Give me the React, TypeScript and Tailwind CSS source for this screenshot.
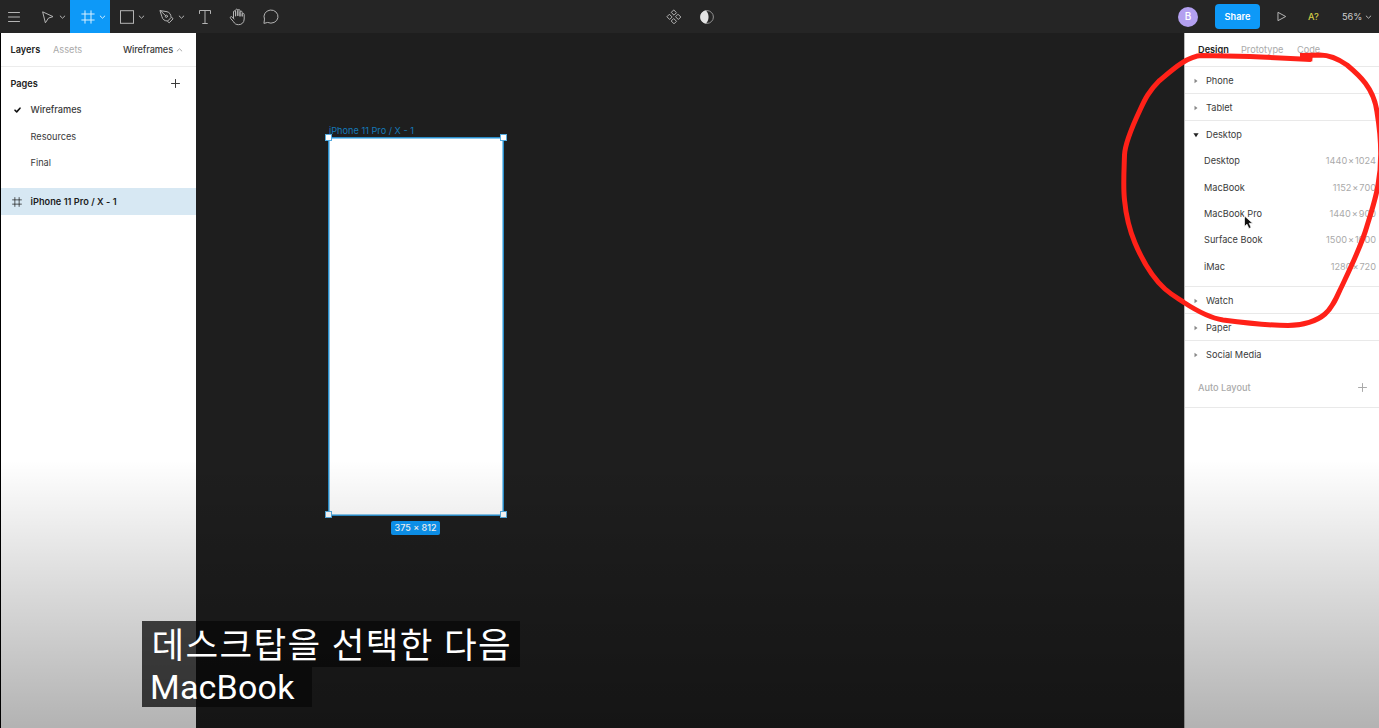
import React from "react";

const stroke = { fill: "none", stroke: "currentColor", strokeLinecap: "round", strokeLinejoin: "round" } as const;

function Chevron({ up = false, className = "" }: { up?: boolean; className?: string }) {
  return (
    <svg className={`block shrink-0 ${className}`} width="7" height="6" viewBox="0 0 7 6" {...stroke}>
      <path d={up ? "M1.2 4 3.5 1.8 5.8 4" : "M1.2 2 3.5 4.2 5.8 2"} />
    </svg>
  );
}

function FrameIcon({ size, className = "" }: { size: number; className?: string }) {
  return (
    <svg className={`block shrink-0 ${className}`} width={size} height={size} viewBox="0 0 14 14" {...stroke}>
      <path d="M4 .8v12.4M10 .8v12.4M.8 4h12.4M.8 10h12.4" />
    </svg>
  );
}

function Plus({ className = "" }: { className?: string }) {
  return (
    <svg className={`block ${className}`} width="10" height="10" viewBox="0 0 10 10" {...stroke}>
      <path d="M4.5 .5v8M.5 4.5h8" />
    </svg>
  );
}

function Toolbar() {
  return (
    <header className="flex h-[33px] shrink-0 items-center bg-[#252525] text-[#b4b4b4]">
      <svg className="ml-2 block" width="12" height="12" viewBox="0 0 12 12" {...stroke}>
        <path d="M.5 1.5h11M.5 6h11M.5 10.5h11" />
      </svg>
      <svg className="ml-[22px] block" width="13" height="14" viewBox="0 0 13 14" {...stroke}>
        <path d="M1 2l10 4.6-4.5 1.5L3.6 12.5z" />
      </svg>
      <Chevron className="ml-1" />
      <div className="ml-1 flex h-full w-[40px] items-center bg-[#0d99f8] pl-[11px] text-[#d8f0ff]">
        <FrameIcon size={14} />
        <Chevron className="ml-[4px]" />
      </div>
      <svg className="ml-[9px] block" width="16" height="16" viewBox="0 0 16 16" {...stroke}>
        <rect x="1.5" y="1.7" width="13" height="12.6" strokeLinejoin="miter" />
      </svg>
      <Chevron className="ml-[3px]" />
      <svg className="ml-[14px] block" width="16" height="15" viewBox="0 0 16 15" {...stroke}>
        <path d="M1.3 1.6 8 2.7c2.6.6 4 2.8 4.1 5.8L8.7 12C5.7 12 3.6 10.6 3 8z" />
        <path d="M1.3 1.6 6.6 6.7M12.7 8.3l1.3 1.6-3.8 3.9-1.6-1.4" />
        <circle cx="7.4" cy="7.3" r="1.1" />
      </svg>
      <Chevron className="ml-[3px]" />
      <svg className="ml-[13px] block" width="14" height="16" viewBox="0 0 14 16" {...stroke}>
        <path d="M1.5 4.5v-3h11v3M7 1.5v13M4.7 14.5h4.6" />
      </svg>
      <svg className="ml-[17px] block" width="17" height="18" viewBox="0 0 17 18" {...stroke}>
        <path d="M4.5 10V4c0-1.6 2.1-1.6 2.1 0v4M6.6 7.5V2.4c0-1.7 2.2-1.7 2.2 0v5.1M8.8 7.5V2.7c0-1.6 2.2-1.6 2.2 0v5.3M11 8V4.3c0-1.6 2.2-1.6 2.2 0V8M13.2 8V6.5c0-1.5 2-1.4 2 0V11c0 3.6-2.6 5.7-5.6 5.7-2.5 0-4-1-5.1-3L1.6 10.4c-1-1.5.7-2.4 1.7-1.4L5 11" />
      </svg>
      <svg className="ml-[16px] block" width="17" height="17" viewBox="0 0 17 17" {...stroke}>
        <path d="M2 15l.5-3.9A7 6.6 0 1 1 6 14.6z" />
      </svg>
      <svg className="ml-[386.5px] block" width="16" height="16" viewBox="0 0 16 16" {...stroke}>
        <path d="M8 1.2l2.5 2.5L8 6.2 5.5 3.7zM8 9.8l2.5 2.5L8 14.8l-2.5-2.5zM3.7 5.5l2.5 2.5-2.5 2.5L1.2 8zM12.3 5.5l2.5 2.5-2.5 2.5L9.8 8z" />
      </svg>
      <svg className="ml-[17px] block" width="16" height="16" viewBox="0 0 16 16">
        <circle cx="8" cy="8" r="6.4" fill="none" stroke="#929292" />
        <path d="M7 1.5c3.4 3.7 3.4 9.3 0 13C-.7 13.500-.7 2.500 7 1.500z" fill="#e2e2e2" />
      </svg>
      <div className="ml-auto flex h-full items-center">
        <div className="flex size-5 items-center justify-center rounded-full bg-[#b3a0f0] text-[10px] font-medium text-white">B</div>
        <div className="ml-[17px] flex h-[25px] w-[45px] items-center justify-center rounded-[4px] bg-[#0d99f8] pt-px text-[9.2px] font-semibold text-white">Share</div>
        <svg className="ml-[17px] block" width="10" height="11" viewBox="0 0 10 11" {...stroke}>
          <path d="M1.3 1.5 8.7 5.5l-7.4 4z" />
        </svg>
        <span className="ml-[21px] w-[12px] whitespace-nowrap text-[9.2px] font-medium text-[#d3cd45]">A?</span>
        <span className="ml-[22px] w-[20px] whitespace-nowrap text-[9.2px] text-[#d0d0d0]">56%</span>
        <Chevron className="mr-[7px] ml-[3px]" />
      </div>
    </header>
  );
}

function LeftPanel() {
  return (
    <aside className="w-[195px] shrink-0 bg-white text-[9.2px] text-[#3a3a3a]">
      <div className="flex h-[34px] items-center border-b border-[#ececec] pl-[9.5px]">
        <span className="w-[42.5px] font-semibold text-[#222]">Layers</span>
        <span className="text-[#aaa]">Assets</span>
        <span className="ml-auto font-medium tracking-[-0.1px]">Wireframes</span>
        <Chevron up className="mr-[13px] ml-[3px] text-[#aaa]" />
      </div>
      <div className="flex h-[33px] items-center justify-between pr-[15px] pl-[9.5px]">
        <span className="font-semibold text-[#222]">Pages</span>
        <Plus />
      </div>
      <div className="flex h-[20px] items-center font-medium">
        <svg className="ml-[12px] block text-[#111]" width="9" height="8" viewBox="0 0 9 8" {...stroke} strokeWidth="1.6">
          <path d="M2 4.2l1.7 1.7L7 2.2" />
        </svg>
        <span className="ml-[8.5px]">Wireframes</span>
      </div>
      <div className="mt-[6px] flex h-[21px] items-center pl-[29.5px]">Resources</div>
      <div className="mt-[5px] flex h-[21px] items-center pl-[29.5px]">Final</div>
      <div className="mt-[15px] flex h-[27px] items-center bg-[#d7e8f3] pt-px pl-[11px] font-semibold text-[#1c1c1c]">
        <FrameIcon size={10} />
        <span className="ml-[8.5px] tracking-[0.03px] whitespace-nowrap">iPhone 11 Pro / X - 1</span>
      </div>
    </aside>
  );
}

function Handle({ className }: { className: string }) {
  return <div className={`absolute size-[7px] border border-[#55abdf] bg-white ${className}`} />;
}

function Canvas() {
  return (
    <main className="relative flex-1 bg-[#1e1e1e]">
      <div className="absolute top-[104px] left-[132px] h-[379px] w-[176px] border border-[#2b8fcb] bg-white shadow-[inset_0_0_0_1px_#8cc8ec]">
        <span className="absolute -top-[13px] left-0 text-[9.2px] leading-[12px] whitespace-nowrap text-[#1579b9]">iPhone 11 Pro / X - 1</span>
        <Handle className="-top-[4px] -left-[4px]" />
        <Handle className="-top-[4px] -right-[4px]" />
        <Handle className="-bottom-[3px] -left-[4px]" />
        <Handle className="-right-[4px] -bottom-[3px]" />
        <div className="absolute top-[383px] left-[62px] flex h-[14px] w-[49px] items-center justify-center rounded-[2px] bg-[#0d99f8] text-[9px] font-medium whitespace-nowrap text-white">375 × 812</div>
      </div>
    </main>
  );
}

function Group({ name, open = false, last = false }: { name: string; open?: boolean; last?: boolean }) {
  return (
    <div className={`flex h-[27px] items-center pt-px pl-[8px] ${open || last ? "" : "border-b border-[#e9e9e9]"}`}>
      <svg className="block" width="6" height="6" viewBox="0 0 6 6">
        {open ? <path d="M.4 1.2h5.2L3 5.2z" fill="#222" /> : <path d="M1.5.8v4.4L4.5 3z" fill="#888" />}
      </svg>
      <span className="ml-[7px]">{name}</span>
    </div>
  );
}

const presets = [
  ["Desktop", "1440", "1024"],
  ["MacBook", "1152", "700"],
  ["MacBook Pro", "1440", "900"],
  ["Surface Book", "1500", "1000"],
  ["iMac", "1280", "720"],
];

function RightPanel() {
  return (
    <aside className="w-[195px] shrink-0 border-l border-[#bbb] bg-white text-[9.2px] text-[#3a3a3a]">
      <div className="flex h-[34px] items-center border-b border-[#e9e9e9] pl-[13px] text-[#aaa]">
        <span className="w-[43px] font-semibold text-[#222]">Design</span>
        <span className="w-[56px]">Prototype</span>
        <span>Code</span>
      </div>
      <Group name="Phone" />
      <Group name="Tablet" />
      <Group name="Desktop" open />
      <div className="h-[139px] border-b border-[#e9e9e9]">
        {presets.map(([name, width, height]) => (
          <div key={name} className="flex h-[26.4px] items-center justify-between pr-[3px] pl-[19px]">
            <span>{name}</span>
            <span className="flex gap-[0.9px] text-[#aaa]">
              <span>{width}</span>
              <span>×</span>
              <span>{height}</span>
            </span>
          </div>
        ))}
      </div>
      <Group name="Watch" />
      <Group name="Paper" />
      <Group name="Social Media" last />
      <div className="flex h-[40px] items-center justify-between border-b border-[#e9e9e9] pr-[11px] pl-[13px] font-medium text-[#aaa]">
        <span>Auto Layout</span>
        <Plus />
      </div>
    </aside>
  );
}

export default function App() {
  return (
    <div className="relative flex h-[728px] w-[1379px] flex-col overflow-hidden bg-[#1e1e1e] font-['Inter',sans-serif]">
      <Toolbar />
      <div className="flex min-h-0 flex-1 border-l border-black">
        <LeftPanel />
        <Canvas />
        <RightPanel />
      </div>
      <div className="pointer-events-none absolute inset-x-0 bottom-0 h-[268px] bg-linear-to-b from-black/0 to-black/30" />

      <svg className="absolute top-[215px] left-[1243px]" width="12" height="16" viewBox="0 0 12 16">
        <path d="M1.5 1v10.5l2.5-2.3 1.9 4.3 2.2-1L6.2 8.3h3.5z" fill="#111" stroke="#fff" strokeWidth=".7" />
      </svg>
      <svg className="absolute inset-0" width="1379" height="728" viewBox="0 0 1379 728" fill="none" stroke="#ff2118" strokeLinejoin="round">
        <path strokeWidth="5" d="M1311 59.5 1250 56.5 1202 55.5C1187 56 1172 70 1159 81C1149 91 1145 99 1140 110C1132 127 1125 143 1124.5 155C1124 172 1123 187 1124.5 200C1126 216 1130 231 1135 243C1143 262 1154 279 1165 289C1173 296 1179 299 1184 302.5C1197 311 1210 318 1223 320C1246 323 1266 325.5 1288 325.5C1303 325.5 1317 321 1325 314C1332 308 1336 299 1340 290C1350 269 1361 247 1367 226C1371 213 1376 198 1378 185C1383 158 1380 130 1377 112C1374 88 1359 75 1347 65C1337 58 1329 55 1320 55L1300 55.5" />
        <path strokeWidth="6" d="M1300 57.5 1312.5 58.5" />
      </svg>

      <div className="absolute top-[621px] left-[142px] flex flex-col items-start font-['Roboto','Noto_Sans_CJK_KR',sans-serif] text-[34px] whitespace-nowrap text-white">
        <div className="flex h-[46px] w-[378px] items-center bg-[#080808]/75 pt-[4px] pl-[9.5px] text-[35.5px] leading-[46px] tracking-[1.35px]">데스크탑을 선택한 다음</div>
        <div className="flex h-[40px] w-[170px] items-center bg-[#080808]/75 pl-[8px] tracking-[0.2px]">MacBook</div>
      </div>
    </div>
  );
}
